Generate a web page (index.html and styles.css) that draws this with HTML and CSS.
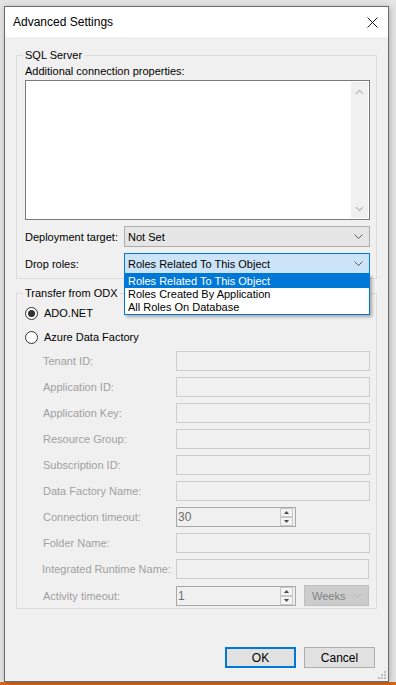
FILE: index.html
```html
<!DOCTYPE html>
<html lang="en">
<head>
  <meta charset="UTF-8" />
  <meta name="viewport" content="width=device-width, initial-scale=1.0"/>
  <title>Advanced Settings</title>
  <link rel="stylesheet" href="styles.css">
</head>
<body>
  <div class="desk">
    <div class="window">

      <!-- title bar -->
      <div class="titlebar">
        <span class="title">Advanced Settings</span>
        <svg class="close" width="11" height="11" viewBox="0 0 11 11">
          <path d="M0.5 0.5 L10.5 10.5 M10.5 0.5 L0.5 10.5" stroke="#1a1a1a" stroke-width="1" fill="none"/>
        </svg>
      </div>

      <div class="client">

        <!-- SQL Server -->
        <fieldset class="group sql">
          <legend>SQL Server</legend>
          <div class="caption">Additional connection properties:</div>
          <div class="memo">
            <div class="vscroll">
              <svg width="9" height="6" viewBox="0 0 9 6"><path d="M1 5 L4.5 1.5 L8 5" stroke="#c3c3c3" stroke-width="1.6" fill="none"/></svg>
              <svg width="9" height="6" viewBox="0 0 9 6"><path d="M1 1 L4.5 4.5 L8 1" stroke="#c3c3c3" stroke-width="1.6" fill="none"/></svg>
            </div>
          </div>
          <div class="row">
            <span class="label">Deployment target:</span>
            <div class="combo">
              <span>Not Set</span>
              <svg class="chev" width="9" height="5" viewBox="0 0 9 5"><path d="M0.5 0.5 L4.5 4.5 L8.5 0.5" stroke="#5a5a5a" stroke-width="1" fill="none"/></svg>
            </div>
          </div>
          <div class="row">
            <span class="label">Drop roles:</span>
            <div class="combo focused">
              <span>Roles Related To This Object</span>
              <svg class="chev" width="9" height="5" viewBox="0 0 9 5"><path d="M0.5 0.5 L4.5 4.5 L8.5 0.5" stroke="#5a5a5a" stroke-width="1" fill="none"/></svg>
              <ul class="droplist">
                <li class="selected">Roles Related To This Object</li>
                <li>Roles Created By Application</li>
                <li>All Roles On Database</li>
              </ul>
            </div>
          </div>
        </fieldset>

        <!-- Transfer from ODX -->
        <fieldset class="group odx">
          <legend>Transfer from ODX</legend>
          <div class="radio checked"><span class="dot"></span>ADO.NET</div>
          <div class="radio"><span class="dot"></span>Azure Data Factory</div>

          <div class="fields">
            <div class="field"><span class="flabel">Tenant ID:</span><div class="box"></div></div>
            <div class="field"><span class="flabel">Application ID:</span><div class="box"></div></div>
            <div class="field"><span class="flabel">Application Key:</span><div class="box"></div></div>
            <div class="field"><span class="flabel">Resource Group:</span><div class="box"></div></div>
            <div class="field"><span class="flabel">Subscription ID:</span><div class="box"></div></div>
            <div class="field"><span class="flabel">Data Factory Name:</span><div class="box"></div></div>
            <div class="field">
              <span class="flabel">Connection timeout:</span>
              <div class="spin">
                <span>30</span>
                <div class="spinbtns">
                  <span class="sb"><svg width="5" height="3" viewBox="0 0 5 3"><path d="M0 3 L2.5 0 L5 3 Z" fill="#4a4a4a"/></svg></span>
                  <span class="sb"><svg width="5" height="3" viewBox="0 0 5 3"><path d="M0 0 L2.5 3 L5 0 Z" fill="#4a4a4a"/></svg></span>
                </div>
              </div>
            </div>
            <div class="field"><span class="flabel">Folder Name:</span><div class="box"></div></div>
            <div class="field"><span class="flabel ir">Integrated Runtime Name:</span><div class="box ir"></div></div>
            <div class="field">
              <span class="flabel">Activity timeout:</span>
              <div class="spin">
                <span>1</span>
                <div class="spinbtns">
                  <span class="sb"><svg width="5" height="3" viewBox="0 0 5 3"><path d="M0 3 L2.5 0 L5 3 Z" fill="#4a4a4a"/></svg></span>
                  <span class="sb"><svg width="5" height="3" viewBox="0 0 5 3"><path d="M0 0 L2.5 3 L5 0 Z" fill="#4a4a4a"/></svg></span>
                </div>
              </div>
              <div class="combo disabled">
                <span>Weeks</span>
                <svg class="chev" width="9" height="5" viewBox="0 0 9 5"><path d="M0.5 0.5 L4.5 4.5 L8.5 0.5" stroke="#b4b4b4" stroke-width="1" fill="none"/></svg>
              </div>
            </div>
          </div>
        </fieldset>

        <div class="buttons">
          <div class="btn default">OK</div>
          <div class="btn">Cancel</div>
        </div>
      </div>

      <svg class="grip" width="9" height="9" viewBox="0 0 9 9">
        <rect x="6" y="0" width="2" height="2" fill="#bdbdbd"/>
        <rect x="3" y="3" width="2" height="2" fill="#bdbdbd"/>
        <rect x="6" y="3" width="2" height="2" fill="#bdbdbd"/>
        <rect x="0" y="6" width="2" height="2" fill="#bdbdbd"/>
        <rect x="3" y="6" width="2" height="2" fill="#bdbdbd"/>
        <rect x="6" y="6" width="2" height="2" fill="#bdbdbd"/>
      </svg>
    </div>
  </div>
</body>
</html>
```

FILE: styles.css
```css
body {
  margin: 0;
  font-family: 'Liberation Sans', Arial, sans-serif;
  font-size: 11px;
  color: #000;
}

.desk {
  height: 685px;
  box-sizing: border-box;
  padding: 6px 0 0 4px;
  background: linear-gradient(to top, #d2691e 0, #d2691e 3px, #e4e4e4 3px);
  overflow: hidden;
}

.window {
  position: relative;
  width: 385px;
  height: 676px;
  box-sizing: border-box;
  border: 1px solid #6b6b6b;
  background: #f0f0f0;
  display: flex;
  flex-direction: column;
  box-shadow: 1px 1px 6px rgba(0,0,0,0.25);
}

.titlebar {
  height: 30px;
  background: #fff;
  display: flex;
  align-items: center;
  justify-content: space-between;
  padding: 0 10px 0 8px;
  flex-shrink: 0;
}

.title {
  font-size: 12px;
  color: #000;
}

.close {
  display: block;
}

.client {
  flex: 1;
  display: flex;
  flex-direction: column;
  padding: 11px 11px 13px 11px;
}

.group {
  margin: 0;
  border: 1px solid #dcdcdc;
  padding: 2px 6px 4px 8px;
  min-width: 0;
}

.group legend {
  padding: 0 2px;
  margin-left: -2px;
  line-height: 14px;
  height: 14px;
}

.caption {
  line-height: 14px;
}

.memo {
  margin-top: 2px;
  height: 140px;
  box-sizing: border-box;
  border: 1px solid #7a7a7a;
  background: #fff;
  padding: 1px;
  display: flex;
  justify-content: flex-end;
}

.vscroll {
  width: 17px;
  background: #f0f0f0;
  display: flex;
  flex-direction: column;
  justify-content: space-between;
  align-items: center;
  padding: 7px 0 6px;
}

.vscroll svg {
  display: block;
}

.row {
  display: flex;
  align-items: center;
  margin-top: 6px;
}

.row .label {
  width: 99px;
  flex-shrink: 0;
}

.combo {
  position: relative;
  flex: 1;
  height: 21px;
  box-sizing: border-box;
  border: 1px solid #adadad;
  background: #e5e5e5;
  display: flex;
  align-items: center;
  justify-content: space-between;
  padding: 0 6px 0 3px;
}

.combo.focused {
  background: #cce4f7;
  border-color: #0078d7;
}

.combo.disabled {
  flex: 0 0 65px;
  margin-left: 8px;
  background: #cccccc;
  border-color: #bfbfbf;
  color: #838383;
  padding-left: 7px;
}

.chev {
  display: block;
}

.droplist {
  position: absolute;
  left: -1px;
  right: -1px;
  top: 20px;
  margin: 0;
  padding: 0;
  list-style: none;
  background: #fff;
  border: 1px solid #0078d7;
  box-shadow: 2px 2px 3px rgba(0,0,0,0.3);
  z-index: 2;
}

.droplist li {
  height: 13px;
  line-height: 13px;
  padding-left: 3px;
}

.droplist li.selected {
  background: #0078d7;
  color: #fff;
}

.odx {
  margin-top: 7px;
  padding: 5px 6px 2px 8px;
}

.radio {
  display: flex;
  align-items: center;
  height: 16px;
}

.radio + .radio {
  margin-top: 8px;
}

.dot {
  width: 13px;
  height: 13px;
  box-sizing: border-box;
  border: 1px solid #333;
  border-radius: 50%;
  background: #fff;
  margin-right: 6px;
  display: flex;
  align-items: center;
  justify-content: center;
}

.radio.checked .dot::after {
  content: "";
  width: 7px;
  height: 7px;
  border-radius: 50%;
  background: #333;
}

.fields {
  margin-top: 6px;
  padding-left: 18px;
}

.field {
  display: flex;
  align-items: center;
  height: 20px;
  margin-bottom: 6px;
}

.field:last-child {
  margin-bottom: 0;
  height: 21px;
}

.flabel {
  width: 133px;
  flex-shrink: 0;
  color: #a0a0a0;
}

.flabel.ir {
  margin-left: -1px;
  width: 134px;
}

.box {
  flex: 1;
  height: 20px;
  box-sizing: border-box;
  border: 1px solid #cccccc;
  background: #f0f0f0;
}

.box.ir {
  margin-right: 1px;
}

.spin {
  width: 120px;
  height: 20px;
  box-sizing: border-box;
  border: 1px solid #a8a8a8;
  background: #f0f0f0;
  color: #6d6d6d;
  display: flex;
  align-items: center;
  justify-content: space-between;
  padding: 0 1px 0 1px;
  font-size: 12px;
}

.spinbtns {
  display: flex;
  flex-direction: column;
  width: 13px;
  height: 18px;
  margin-right: 1px;
}

.sb {
  flex: 1;
  box-sizing: border-box;
  border: 1px solid #c9c9c9;
  background: #f3f3f3;
  display: flex;
  align-items: center;
  justify-content: center;
}

.sb svg {
  display: block;
}

.buttons {
  margin-top: auto;
  margin-right: 2px;
  display: flex;
  justify-content: flex-end;
  gap: 8px;
}

.btn {
  width: 71px;
  height: 21px;
  box-sizing: border-box;
  border: 1px solid #adadad;
  background: #e1e1e1;
  display: flex;
  align-items: center;
  justify-content: center;
  font-size: 12px;
}

.btn.default {
  border: 2px solid #0078d7;
}

.grip {
  position: absolute;
  right: 1px;
  bottom: 1px;
}
```
